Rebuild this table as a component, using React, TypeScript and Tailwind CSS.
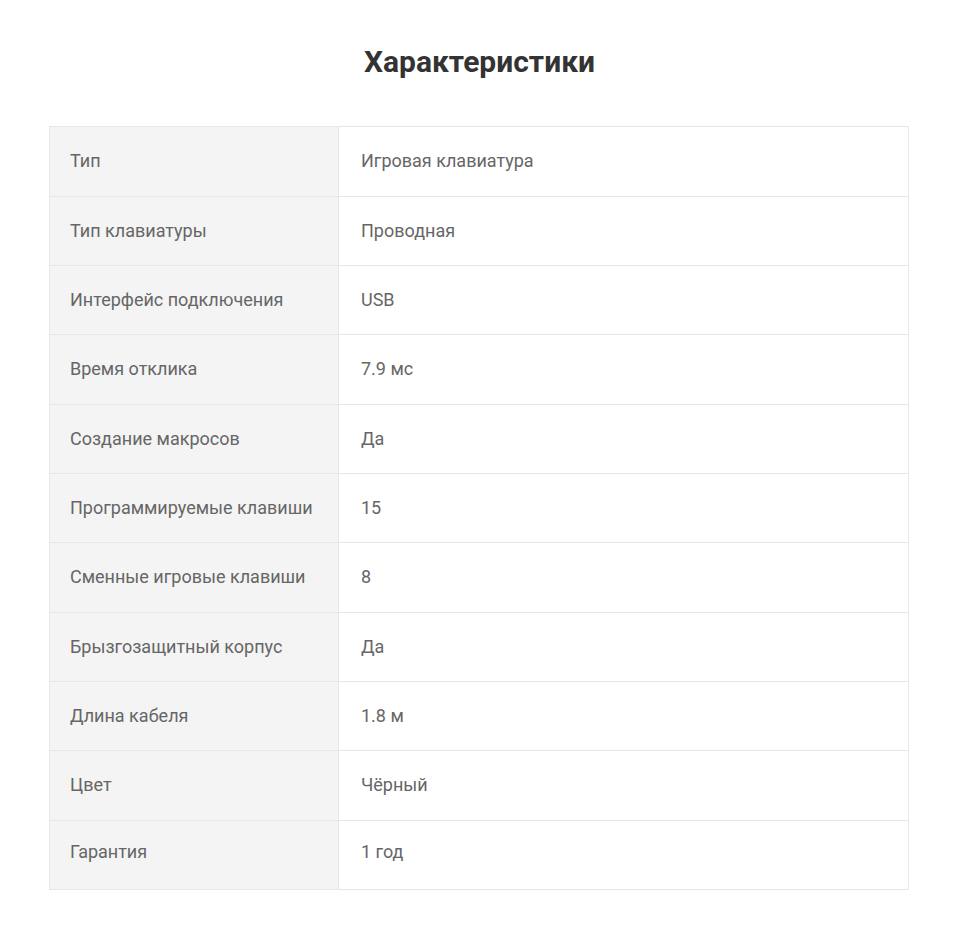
import React from 'react';

type Spec = { label: string; value: string; tall?: boolean };

const specs: Spec[] = [
  { label: 'Тип', value: 'Игровая клавиатура' },
  { label: 'Тип клавиатуры', value: 'Проводная' },
  { label: 'Интерфейс подключения', value: 'USB' },
  { label: 'Время отклика', value: '7.9 мс', tall: true },
  { label: 'Создание макросов', value: 'Да' },
  { label: 'Программируемые клавиши', value: '15' },
  { label: 'Сменные игровые клавиши', value: '8', tall: true },
  { label: 'Брызгозащитный корпус', value: 'Да' },
  { label: 'Длина кабеля', value: '1.8 м' },
  { label: 'Цвет', value: 'Чёрный', tall: true },
  { label: 'Гарантия', value: '1 год' },
];

const App: React.FC = () => {
  return (
    <div className="min-h-screen bg-white font-['Roboto',sans-serif] pt-[43px] pb-[50px]">
      <h1 className="text-center text-[30px] leading-[38px] font-bold text-[#333333]">
        Характеристики
      </h1>

      <div className="ml-[49px] mt-[45px] w-[860px] border border-[#e6e6e6]">
        {specs.map((s, i) => {
          const last = i === specs.length - 1;
          const pad = last ? 'pb-[8px]' : 'pb-[2px]';
          return (
            <div
              key={s.label}
              className={`flex ${i > 0 ? 'border-t border-[#e6e6e6]' : ''} ${s.tall ? 'h-[70px]' : 'h-[69px]'}`}
            >
              <div className={`flex w-[289px] shrink-0 items-center bg-[#f4f4f4] pl-[20px] text-[18px] text-[#666666] border-r border-[#e6e6e6] ${pad}`}>
                {s.label}
              </div>
              <div className={`flex flex-1 items-center pl-[22px] text-[18px] text-[#666666] ${pad}`}>
                {s.value}
              </div>
            </div>
          );
        })}
      </div>
    </div>
  );
};

export default App;
